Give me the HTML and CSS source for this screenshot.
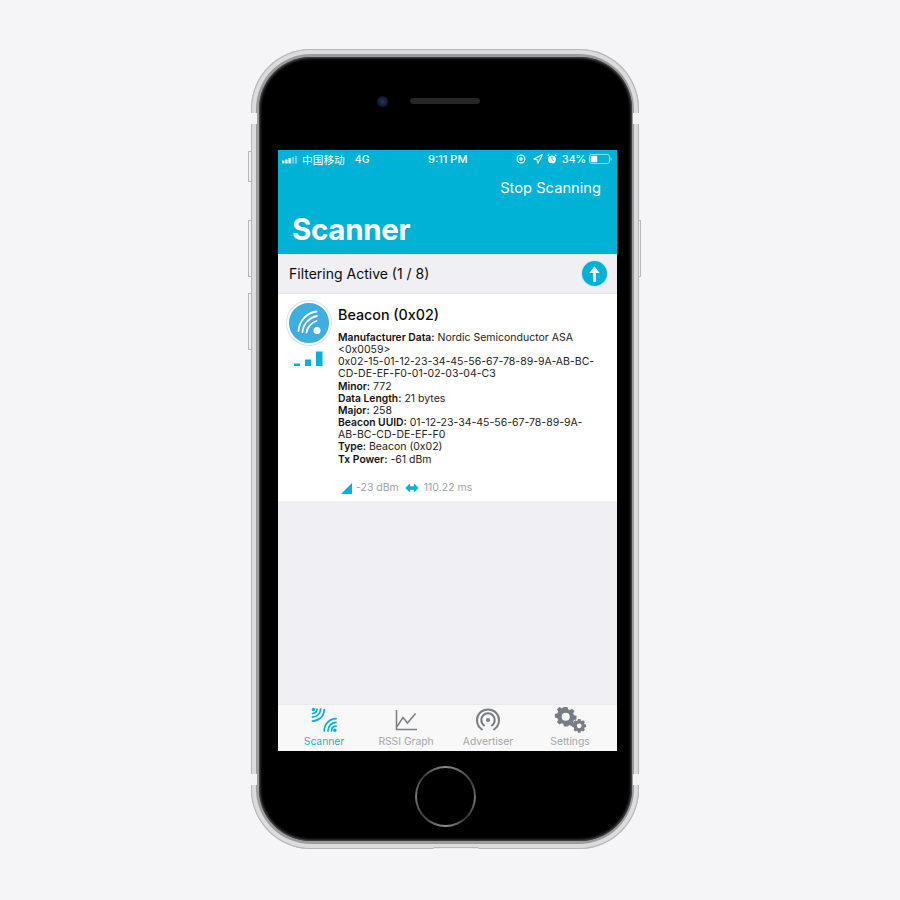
FILE: index.html
```html
<!DOCTYPE html>
<html lang="en">
<head>
<meta charset="utf-8">
<title>Scanner</title>
<link rel="stylesheet" href="styles.css">
</head>
<body>
<div class="phone">
  <span class="btn btn-mute"></span>
  <span class="btn btn-up"></span>
  <span class="btn btn-down"></span>
  <span class="btn btn-power"></span>
  <span class="band band-tl"></span>
  <span class="band band-tr"></span>
  <span class="band band-bl"></span>
  <span class="band band-br"></span>
  <span class="port"></span>
  <div class="face">
    <div class="top">
      <span class="camera"></span>
      <span class="speaker"></span>
    </div>
    <div class="screen">
      <header class="nav">
        <div class="status">
          <div class="status-left">
            <svg class="signal" width="16" height="8" viewBox="0 0 16 8"><rect x="0" y="4.5" width="2.4" height="3" rx=".6" fill="#fff"/><rect x="3.2" y="3.5" width="2.4" height="4" rx=".6" fill="#fff"/><rect x="6.4" y="2" width="2.4" height="5.5" rx=".6" fill="#fff"/><rect x="9.6" y="1" width="2.4" height="6.5" rx=".6" fill="#ffffff66"/><rect x="12.8" y="0" width="2.4" height="7.5" rx=".6" fill="#ffffff66"/></svg>
            <span class="carrier">中国移动</span>
            <span class="net">4G</span>
          </div>
          <span class="clock">9:11 PM</span>
          <div class="status-right">
            <svg width="10" height="10" viewBox="0 0 10 10"><circle cx="5" cy="5" r="3.9" fill="none" stroke="#fff" stroke-width="1.1"/><circle cx="5" cy="5" r="1.8" fill="#fff"/></svg>
            <svg class="gap-wide" width="10" height="10" viewBox="0 0 10 10"><path d="M9.5.5 4.9 9.2 4.2 5.8 .8 5z" fill="none" stroke="#fff" stroke-width="1.1" stroke-linejoin="round"/></svg>
            <svg width="10" height="10" viewBox="0 0 10 10"><circle cx="5" cy="5.4" r="3.9" fill="#fff"/><path d="M5 3v2.6l1.5 1" fill="none" stroke="#00b3d6" stroke-width=".9"/><path d="M.6 2.2 2.2.6M9.4 2.2 7.8.6" stroke="#fff" stroke-width="1.2"/></svg>
            <span class="pct">34%</span>
            <svg width="23" height="10" viewBox="0 0 23 10"><rect x=".5" y=".5" width="20" height="9" rx="2.2" fill="none" stroke="#ffffffb0" stroke-width=".8"/><rect x="1.7" y="1.7" width="6.6" height="6.6" rx="1" fill="#fff"/><path d="M21.6 3.4c.8.2 1 .8 1 1.6s-.2 1.4-1 1.6z" fill="#ffffffb0"/></svg>
          </div>
        </div>
        <div class="nav-action">Stop Scanning</div>
        <h1 class="nav-title">Scanner</h1>
      </header>
      <div class="filter">
        <span class="filter-label">Filtering Active (1 / 8)</span>
        <span class="filter-btn">
          <svg width="23" height="23" viewBox="0 0 22 22"><path d="M11 18V6.500" stroke="#fff" stroke-width="2.800" stroke-linecap="round"/><path d="M6 10.500 11 4.300l5 6.200z" fill="#fff"/></svg>
        </span>
      </div>
      <article class="card">
        <div class="card-icons">
          <div class="avatar">
            <svg width="40" height="40" viewBox="0 0 40 40" fill="none" stroke="#fff" stroke-linecap="round"><path d="M9.500 28C10 18 17.500 10 27.500 8.500" stroke-width="1.800"/><path d="M13.500 29C14 21.500 20 14.500 28 13" stroke-width="1.800"/><path d="M17.500 29.500C18 25 22 19.500 27.500 18" stroke-width="1.800"/><circle cx="28" cy="27.500" r="3.500" fill="#fff" stroke="none"/></svg>
          </div>
          <svg class="bars" width="30" height="16" viewBox="0 0 30 16"><rect x="0" y="12.500" width="6" height="2.500" fill="#00b3d6"/><rect x="11" y="8.500" width="6" height="6.500" fill="#00b3d6"/><rect x="22" y="0.500" width="6.500" height="14.500" fill="#00b3d6"/></svg>
        </div>
        <div class="card-body">
          <h2 class="card-title">Beacon (0x02)</h2>
          <div class="data">
            <p><b>Manufacturer Data:</b> Nordic Semiconductor ASA</p>
            <p>&lt;0x0059&gt;</p>
            <p>0x02-15-01-12-23-34-45-56-67-78-89-9A-AB-BC-</p>
            <p>CD-DE-EF-F0-01-02-03-04-C3</p>
            <p><b>Minor:</b> 772</p>
            <p><b>Data Length:</b> 21 bytes</p>
            <p><b>Major:</b> 258</p>
            <p><b>Beacon UUID:</b> 01-12-23-34-45-56-67-78-89-9A-</p>
            <p>AB-BC-CD-DE-EF-F0</p>
            <p><b>Type:</b> Beacon (0x02)</p>
            <p><b>Tx Power:</b> -61 dBm</p>
          </div>
          <div class="meta">
            <svg class="meta-rssi" width="11" height="11" viewBox="0 0 11 11"><path d="M11 0v11H0z" fill="#00b3d6"/></svg>
            <span class="meta-text">-23 dBm</span>
            <svg class="meta-int" width="14" height="10" viewBox="0 0 14 10"><path d="M.3 5 5 .5v2.800h4V.5L13.700 5 9 9.500V6.700H5v2.800z" fill="#00b3d6"/></svg>
            <span class="meta-text">110.22 ms</span>
          </div>
        </div>
      </article>
      <div class="empty"></div>
      <nav class="tabs">
        <div class="tab tab-active">
          <svg width="28" height="26" viewBox="0 0 28 26" fill="none" stroke="#00b3d6" stroke-width="1.700" stroke-linecap="round"><circle cx="3.500" cy="2.500" r="1.700" fill="#00b3d6" stroke="none"/><path d="M7 2c0 2.500-1.500 4.200-4.500 4.500"/><path d="M10.500 2.200c0 4.500-3.500 7.600-8 8"/><path d="M14.200 2.500C14.200 9 9 14 2.500 14.200"/><circle cx="24.800" cy="23.300" r="1.700" fill="#00b3d6" stroke="none"/><path d="M21.500 24c0-2.800 1.800-4.600 4.500-4.800"/><path d="M18 24c0-5 3.500-8.300 8-8.600"/><path d="M14.200 24c0-6.800 5-12 11.800-12.300"/></svg>
          <span>Scanner</span>
        </div>
        <div class="tab">
          <svg width="24" height="26" viewBox="0 0 24 26" fill="none" stroke="#777d84" stroke-width="1.500"><path d="M2.500 3v19.500h20.500"/><path d="M3 19.500 9 10.500l4.500 5.500L21.500 6.500"/></svg>
          <span>RSSI Graph</span>
        </div>
        <div class="tab">
          <svg width="26" height="26" viewBox="0 0 26 26" fill="none" stroke="#777d84" stroke-linecap="round"><path d="M7 22.500C4 20.500 2 17 2 13 2 7 7 2.500 13 2.500S24 7 24 13c0 4-2 7.500-5 9.500" stroke-width="2"/><path d="M9 18.500C7.300 17.200 6.300 15.200 6.300 13c0-3.700 3-6.700 6.700-6.700s6.700 3 6.700 6.700c0 2.200-1 4.200-2.700 5.500" stroke-width="2"/><circle cx="13" cy="13" r="2" fill="#777d84" stroke="none"/></svg>
          <span>Advertiser</span>
        </div>
        <div class="tab">
          <svg width="34" height="26" viewBox="0 0 34 26"><g fill="#777d84"><path fill-rule="evenodd" d="M11 2h4l.6 2.700 2 .9 2.400-1.500 2.800 2.800-1.500 2.400.9 2 2.800.7v4l-2.800.6-.9 2 1.500 2.400-2.800 2.800-2.400-1.500-2 .9L15 24h-4l-.6-2.800-2-.9L6 21.800 3.200 19l1.500-2.400-.9-2L1 14v-4l2.800-.7.9-2L3.200 4.900 6 2.100l2.400 1.500 2-.9zM13 8.500a4.500 4.500 0 1 0 0 9 4.500 4.500 0 0 0 0-9z" transform="translate(1 -2) scale(.9)"/><path fill-rule="evenodd" d="M25 12h2.400l.4 1.500 1.100.5 1.300-.8 1.700 1.700-.8 1.300.5 1.100 1.500.4V20l-1.500.4-.5 1.100.8 1.300-1.700 1.700-1.300-.8-1.100.5-.4 1.500H25l-.4-1.500-1.100-.5-1.300.8-1.700-1.700.8-1.300-.5-1.100-1.500-.4v-2.300l1.500-.4.500-1.100-.8-1.300 1.700-1.700 1.300.8 1.100-.5zM26.200 16.400a2.400 2.400 0 1 0 0 4.800 2.400 2.400 0 0 0 0-4.800z"/></g></svg>
          <span>Settings</span>
        </div>
      </nav>
    </div>
    <div class="bottom">
      <span class="home"></span>
    </div>
  </div>
</div>
</body>
</html>
```

FILE: styles.css
```css
* { box-sizing: border-box; }
html, body { margin: 0; height: 100%; }
body {
  background: #f5f5f7;
  padding: 49px 0 0 251px;
  font-family: Inter, "Noto Sans CJK SC", sans-serif;
}
p, h1, h2 { margin: 0; }

.phone {
  position: relative;
  width: 388px;
  height: 800px;
  padding: 8px 7px 8px 8px;
  border-radius: 60px;
  background: #9c9c9e;
  box-shadow: inset 0 0 0 1px #b6b6b8, inset 0 0 0 5px #dcdcde;
}
.btn { position: absolute; background: #f0f0f2; border: 1px solid #b8b8ba; }
.btn-mute { left: -3px; top: 102px; width: 3px; height: 31px; border-right: 0; border-radius: 1px 0 0 1px; }
.btn-up { left: -3px; top: 171px; width: 3px; height: 57px; border-right: 0; border-radius: 1px 0 0 1px; }
.btn-down { left: -3px; top: 244px; width: 3px; height: 57px; border-right: 0; border-radius: 1px 0 0 1px; }
.btn-power { right: -2px; top: 171px; width: 2px; height: 57px; border-left: 0; }
.band { position: absolute; width: 6px; height: 11px; background: #f4f4f5; }
.band-tl { left: 0; top: 64px; }
.band-tr { right: 0; top: 64px; }
.band-bl { left: 0; bottom: 64px; }
.band-br { right: 0; bottom: 64px; }
.port { position: absolute; left: 182px; bottom: 0; width: 46px; height: 2px; background: #e9e9eb; border-top: 1px solid #b8b8ba; border-radius: 2px 2px 0 0; }

.face {
  display: flex;
  flex-direction: column;
  height: 784px;
  border-radius: 52px;
  background: #000;
  box-shadow: inset 0 0 3px 1px #5c5c60;
}
.top {
  display: flex;
  align-items: center;
  gap: 22px;
  width: 100%;
  height: 93px;
  padding: 0 0 5px 118px;
}
.camera {
  width: 11px;
  height: 11px;
  border-radius: 50%;
  background: radial-gradient(circle, #27355e 0, #15203e 45%, #0b0f1c 100%);
}
.speaker { width: 70px; height: 6px; border-radius: 3px; background: #26262a; }

.screen {
  display: flex;
  flex-direction: column;
  width: 339px;
  height: 601px;
  margin-left: 19px;
  background: #efeff4;
  overflow: hidden;
}
.nav { height: 104px; background: #00b3d6; color: #fff; padding: 0 5px 0 4px; flex: none; }
.status { display: flex; justify-content: space-between; align-items: center; height: 18px; position: relative; font-size: 10.500px; font-weight: 500; }
.status-left { display: flex; align-items: center; gap: 4px; }
.signal { margin-top: 1px; }
.carrier { font-family: "Noto Sans CJK SC", sans-serif; font-size: 10.700px; font-weight: 400; }
.net { margin-left: 6px; }
.clock { position: absolute; left: 146px; top: 2px; font-size: 11px; line-height: 14px; }
.status-right { display: flex; align-items: center; gap: 4px; }
.gap-wide { margin-left: 3px; }
.pct { margin-left: 1px; margin-right: -1px; }
.nav-action { text-align: right; font-size: 14.700px; line-height: 18px; margin: 11px 11px 0 0; }
.nav-title { font-size: 29.500px; font-weight: 700; line-height: 36px; letter-spacing: -.3px; margin: 14px 0 0 10px; }

.filter {
  display: flex;
  align-items: center;
  justify-content: space-between;
  height: 40px;
  padding: 0 10px 0 11px;
  background: #efeff4;
  border-bottom: 1px solid #e4e4e8;
  font-size: 14px;
  color: #0b0b0b;
  flex: none;
}
.filter-btn { display: flex; width: 25px; height: 25px; padding: 1px; border-radius: 50%; background: #00b3d6; box-shadow: 0 0 0 1px #dfe6ea; }

.card { display: flex; flex: none; height: 207px; background: #fff; padding: 7px 0 0 9px; }
.card-icons { display: flex; flex-direction: column; align-items: center; width: 44px; }
.avatar {
  display: flex;
  align-items: center;
  justify-content: center;
  width: 44px;
  height: 44px;
  border-radius: 50%;
  background: #3daee0;
  border: 2px solid #fff;
  box-shadow: 0 0 0 1px #d6e3e9;
}
.bars { margin-top: 6px; }
.card-body { margin-left: 7px; padding-top: 4px; }
.card-title { font-size: 14.300px; font-weight: 500; line-height: 20px; color: #0a0a0a; }
.data { margin-top: 7px; font-size: 10.500px; line-height: 12.150px; color: #222; white-space: nowrap; }
.data b { font-size: 10.300px; line-height: 1; font-weight: 600; color: #111; }
.meta { display: flex; align-items: center; margin: 15.500px 0 0 3px; font-size: 10.500px; color: #a0a4a9; }
.meta-text { line-height: 14px; }
.meta-rssi { margin-right: 4px; }
.meta-int { margin: 0 5px 0 6px; }

.empty { flex: 1; }
.tabs {
  display: flex;
  flex: none;
  height: 47px;
  padding: 0 6px 0 5px;
  background: #f8f8f8;
  border-top: 1px solid #eaeaec;
}
.tab {
  display: flex;
  flex: 1;
  flex-direction: column;
  align-items: center;
  font-size: 10.300px;
  line-height: 12px;
  color: #a2a6ab;
}
.tab svg { margin-top: 2px; }
.tab span { margin-top: 2px; }
.tab-active { color: #1eb1d4; }

.bottom { display: flex; justify-content: center; align-items: center; flex: 1; padding: 0 1px 0 0; }
.home {
  position: relative;
  width: 61px;
  height: 61px;
  border-radius: 50%;
  padding: 2px;
  background: conic-gradient(#8a8a8e 0, #3c3c40 60deg, #77777c 95deg, #303034 135deg, #8f8f93 180deg, #3c3c40 230deg, #77777c 270deg, #3a3a3e 310deg, #8a8a8e 360deg);
}
.home::before {
  content: "";
  display: block;
  width: 100%;
  height: 100%;
  border-radius: 50%;
  background: #000;
}
```
